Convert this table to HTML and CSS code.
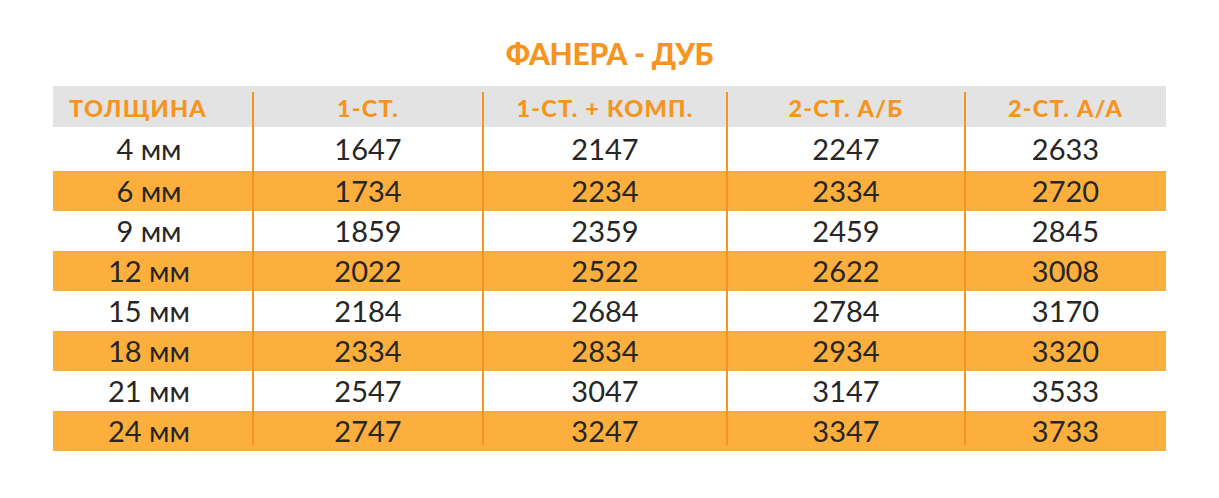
FILE: index.html
```html
<!DOCTYPE html>
<html lang="ru">
<head>
<meta charset="utf-8">
<title>Фанера - дуб</title>
<link rel="stylesheet" href="styles.css">
</head>
<body>
<main class="page">
  <h1 class="title">ФАНЕРА - ДУБ</h1>
  <div class="table">
    <div class="row head">
      <div class="cell first">ТОЛЩИНА</div>
      <div class="cell">1-СТ.</div>
      <div class="cell">1-СТ. + КОМП.</div>
      <div class="cell">2-СТ. А/Б</div>
      <div class="cell">2-СТ. А/А</div>
    </div>
    <div class="row"><div class="cell first">4 мм</div><div class="cell">1647</div><div class="cell">2147</div><div class="cell">2247</div><div class="cell">2633</div></div>
    <div class="row alt"><div class="cell first">6 мм</div><div class="cell">1734</div><div class="cell">2234</div><div class="cell">2334</div><div class="cell">2720</div></div>
    <div class="row"><div class="cell first">9 мм</div><div class="cell">1859</div><div class="cell">2359</div><div class="cell">2459</div><div class="cell">2845</div></div>
    <div class="row alt"><div class="cell first">12 мм</div><div class="cell">2022</div><div class="cell">2522</div><div class="cell">2622</div><div class="cell">3008</div></div>
    <div class="row"><div class="cell first">15 мм</div><div class="cell">2184</div><div class="cell">2684</div><div class="cell">2784</div><div class="cell">3170</div></div>
    <div class="row alt"><div class="cell first">18 мм</div><div class="cell">2334</div><div class="cell">2834</div><div class="cell">2934</div><div class="cell">3320</div></div>
    <div class="row"><div class="cell first">21 мм</div><div class="cell">2547</div><div class="cell">3047</div><div class="cell">3147</div><div class="cell">3533</div></div>
    <div class="row alt"><div class="cell first">24 мм</div><div class="cell">2747</div><div class="cell">3247</div><div class="cell">3347</div><div class="cell">3733</div></div>
    <div class="dividers" aria-hidden="true">
      <span></span><span class="line"></span><span class="line"></span><span class="line"></span><span class="line"></span>
    </div>
  </div>
</main>
</body>
</html>
```

FILE: styles.css
```css
* { box-sizing: border-box; }

html, body {
  margin: 0;
  padding: 0;
  background: #ffffff;
}

body {
  font-family: Lato, "Open Sans", "DejaVu Sans", sans-serif;
  color: #262626;
}

.page {
  width: 1219px;
  padding-top: 35px;
}

.title {
  margin: 0 0 15px 0;
  text-align: center;
  font-size: 30px;
  line-height: 36px;
  font-weight: 900;
  color: #f7941d;
  letter-spacing: -0.3px;
}

.table {
  position: relative;
  width: 1113px;
  margin-left: 53px;
}

.row {
  display: grid;
  grid-template-columns: 200px 230px 244px 238px 201px;
  height: 40px;
  align-items: center;
}

.row.head {
  height: 41px;
  background: #e3e3e3;
}

.row.head + .row {
  height: 44px;
}

.row.alt {
  background: #fcaf3c;
}

.cell {
  text-align: center;
  font-size: 29px;
  line-height: 36px;
  font-weight: 400;
  color: #262626;
}

.cell.first {
  padding-right: 8px;
}

.head .cell {
  font-size: 23.5px;
  font-weight: 900;
  letter-spacing: 1.2px;
  color: #f7941d;
  padding-top: 3px;
}

.head .cell.first {
  text-align: left;
  padding-left: 16px;
  padding-right: 0;
}

.dividers {
  position: absolute;
  top: 6px;
  bottom: 6px;
  left: 0;
  right: 0;
  display: grid;
  grid-template-columns: 200px 230px 244px 238px 201px;
  pointer-events: none;
}

.dividers .line {
  border-left: 2px solid #f7941d;
  margin-left: -1px;
}
```
